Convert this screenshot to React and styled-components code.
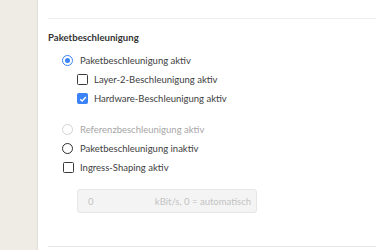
import React from "react";
import styled, { createGlobalStyle } from "styled-components";

const Global = createGlobalStyle`
  html, body { margin: 0; padding: 0; background: #fff; }
  body { font-family: "Lato", "Noto Sans", sans-serif; color: #3d3d3d; }
`;

const Page = styled.div`
  display: flex;
  height: 250px;
  overflow: hidden;
`;

const Sidebar = styled.div`
  width: 37px;
  flex: none;
  background: #efece6;
  border-right: 1px solid #e3dfd7;
`;

const Main = styled.div`
  flex: 1;
  padding-left: 10px;
  padding-top: 18px;
`;

const Section = styled.section`
  border-top: 1px solid #ececec;
  border-bottom: 1px solid #e8e8e8;
  padding: 12px 0 33px;
`;

const Heading = styled.h3`
  margin: 0 0 6px;
  font-size: 9.6px;
  font-weight: 700;
  color: #333;
  line-height: 14px;
`;

const Row = styled.label`
  display: flex;
  align-items: center;
  height: 19px;
  padding-left: ${(p) => p.$indent || 0}px;
  margin-top: ${(p) => p.$gap || 0}px;
  font-size: 9.5px;
  white-space: nowrap;
  color: ${(p) => (p.$disabled ? "#a6a6a6" : "#3d3d3d")};
`;

const Radio = styled.span`
  box-sizing: border-box;
  width: 11px;
  height: 11px;
  margin-right: 7px;
  border-radius: 50%;
  flex: none;
  border: 1.5px solid ${(p) => (p.$disabled ? "#d2d2d2" : p.$checked ? "#3b82f6" : "#2f2f2f")};
  display: flex;
  align-items: center;
  justify-content: center;
  &::after {
    content: "";
    display: ${(p) => (p.$checked ? "block" : "none")};
    width: 5px;
    height: 5px;
    border-radius: 50%;
    background: #3b82f6;
  }
`;

const Check = styled.span`
  box-sizing: border-box;
  width: 11px;
  height: 11px;
  margin-right: 6px;
  flex: none;
  border-radius: 1.5px;
  border: 1.5px solid ${(p) => (p.$checked ? "#3b82f6" : "#3a3a3a")};
  background: ${(p) => (p.$checked ? "#3b82f6" : "#fff")};
  display: flex;
  align-items: center;
  justify-content: center;
`;

const Input = styled.div`
  box-sizing: border-box;
  margin: 12px 0 0 29px;
  width: 180px;
  height: 24px;
  border: 1px solid #e6e6e6;
  border-radius: 3px;
  background: #f4f4f4;
  display: flex;
  align-items: center;
  justify-content: space-between;
  padding: 0 5px 0 10px;
  font-size: 9.5px;
  white-space: nowrap;
  color: #c2c2c2;
`;

const Tick = () => (
  <svg width="8" height="8" viewBox="0 0 10 10">
    <path d="M1.5 5.2 L4 7.6 L8.6 2.6" fill="none" stroke="#fff" strokeWidth="1.7" />
  </svg>
);

export default function App() {
  return (
    <>
      <Global />
      <Page>
        <Sidebar />
        <Main>
          <Section>
            <Heading>Paketbeschleunigung</Heading>
            <Row $indent={14}>
              <Radio $checked />
              Paketbeschleunigung aktiv
            </Row>
            <Row $indent={29}>
              <Check />
              Layer-2-Beschleunigung aktiv
            </Row>
            <Row $indent={29}>
              <Check $checked>
                <Tick />
              </Check>
              Hardware-Beschleunigung aktiv
            </Row>
            <Row $indent={14} $gap={12} $disabled>
              <Radio $disabled />
              Referenzbeschleunigung aktiv
            </Row>
            <Row $indent={14}>
              <Radio />
              Paketbeschleunigung inaktiv
            </Row>
            <Row $indent={15}>
              <Check />
              Ingress-Shaping aktiv
            </Row>
            <Input>
              <span>0</span>
              <span>kBit/s, 0 = automatisch</span>
            </Input>
          </Section>
        </Main>
      </Page>
    </>
  );
}
